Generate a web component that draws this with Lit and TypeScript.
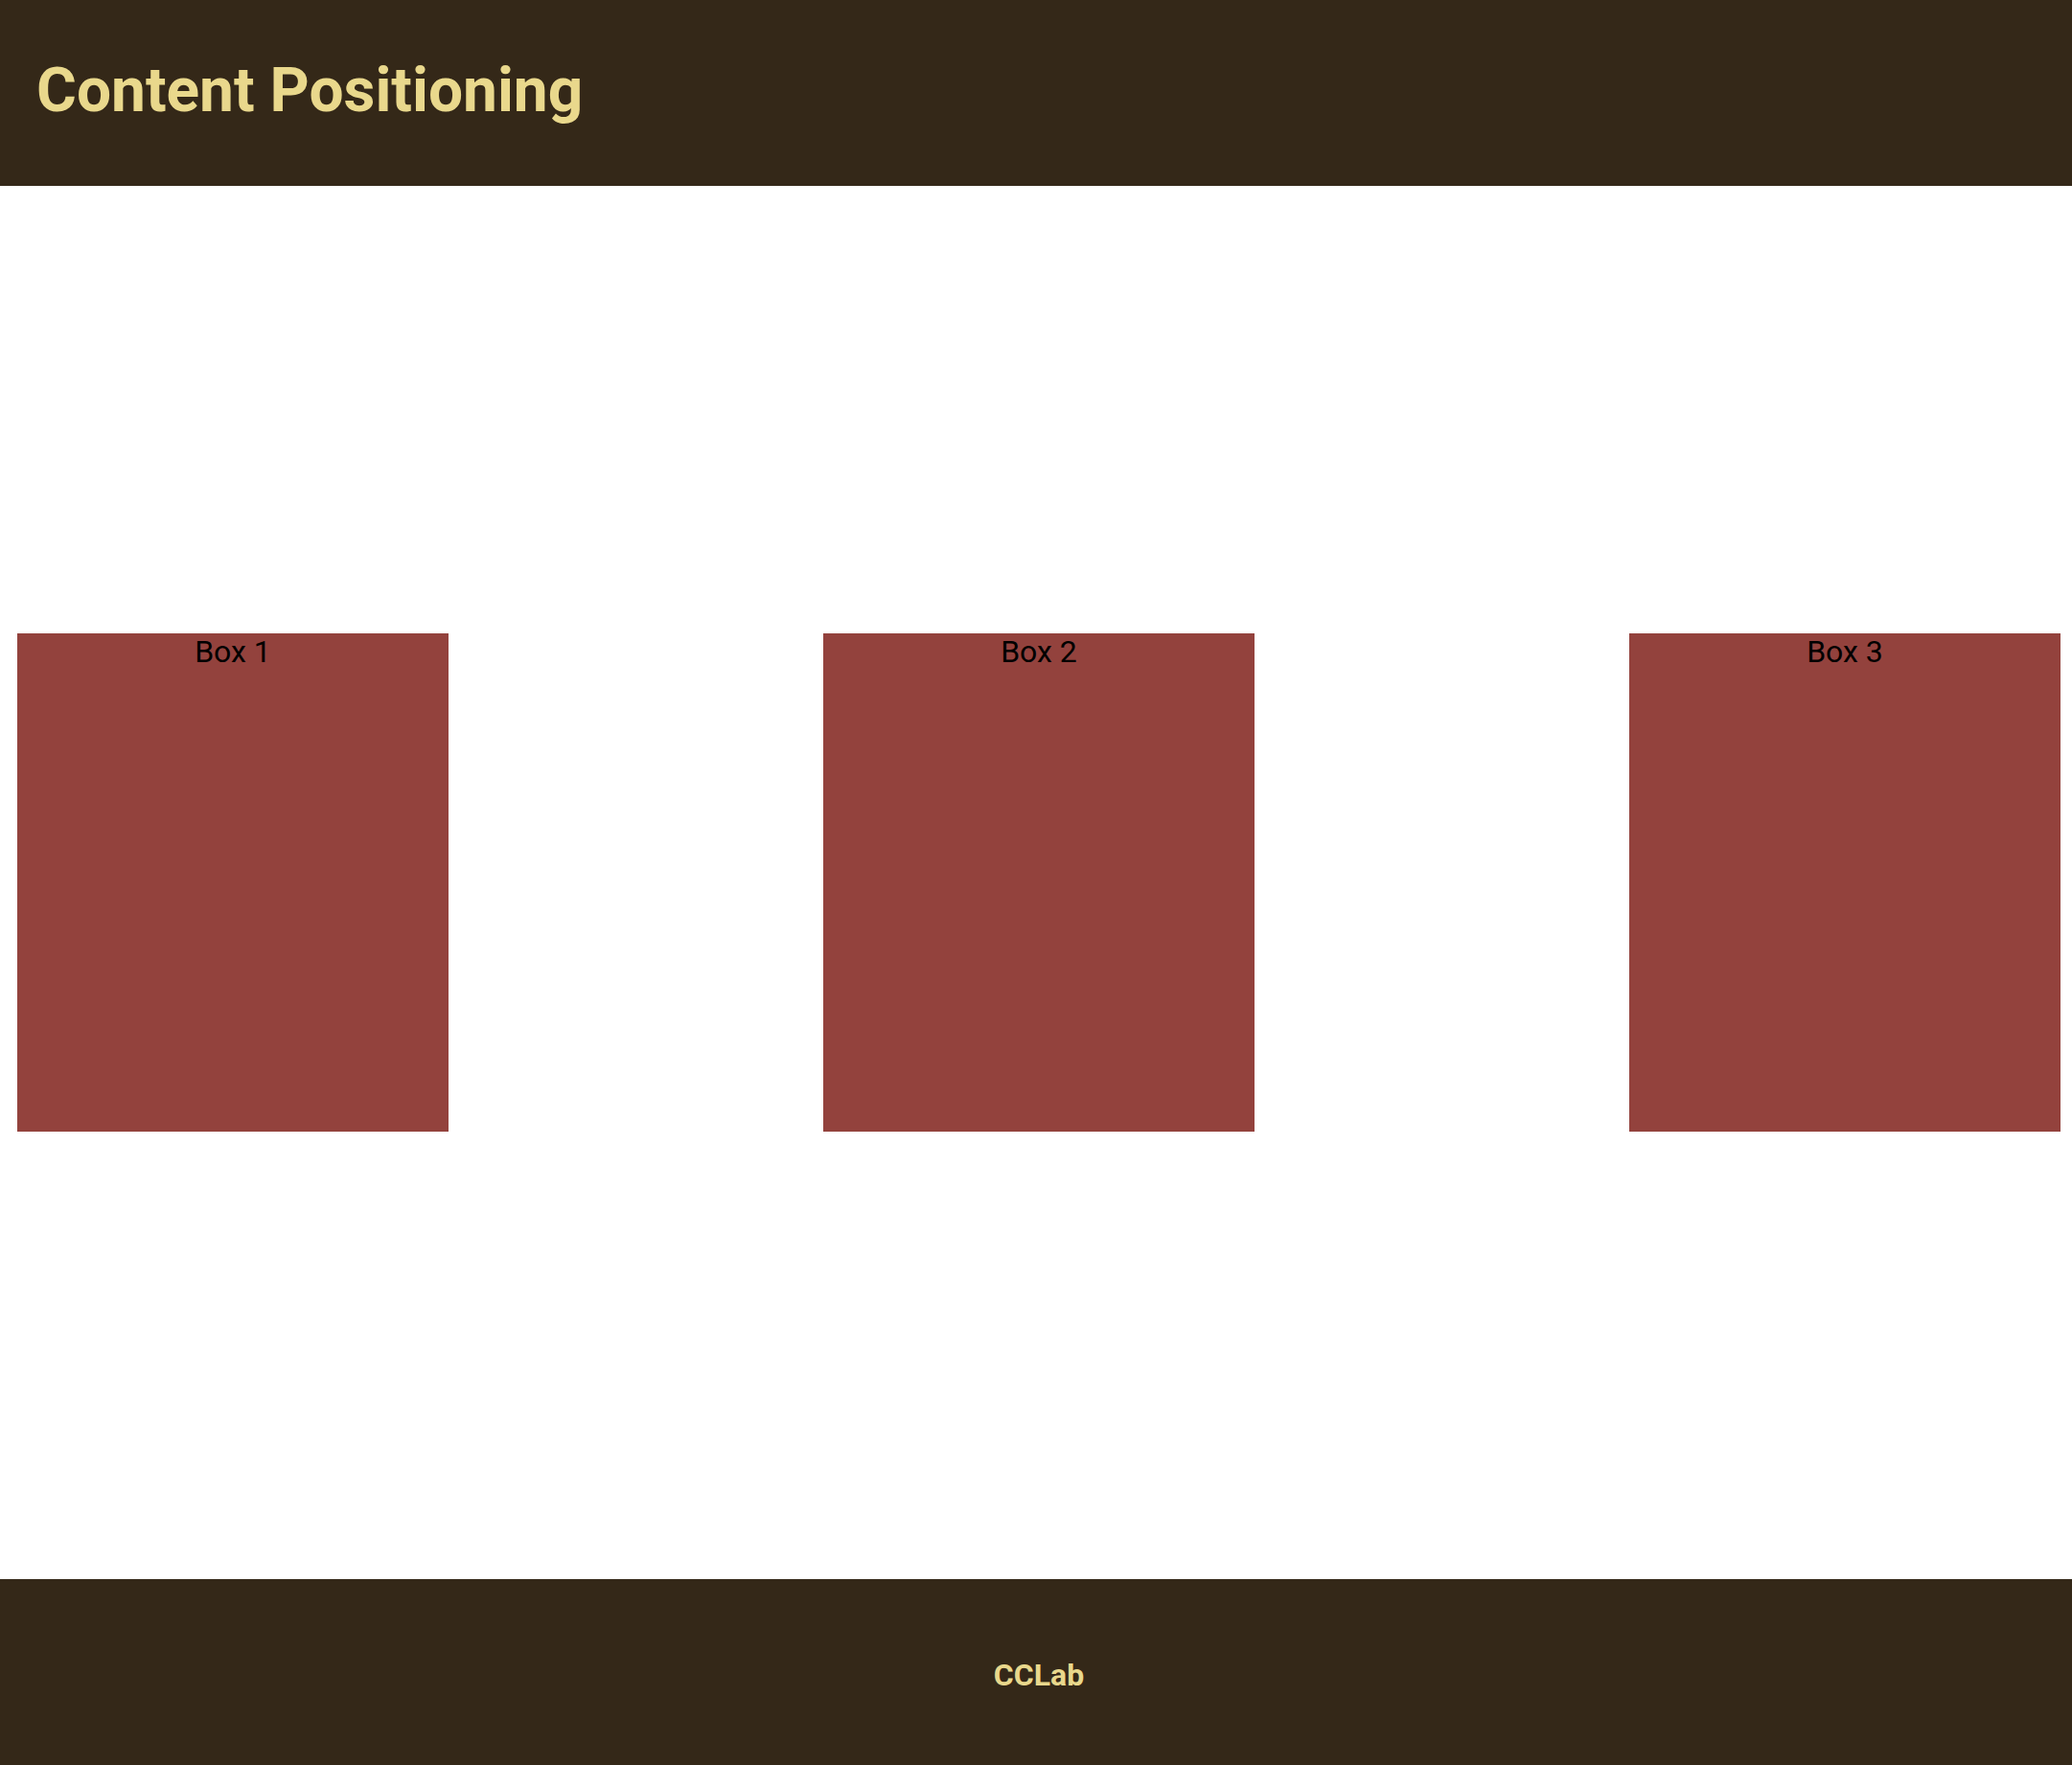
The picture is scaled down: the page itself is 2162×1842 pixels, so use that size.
import { LitElement, html, css } from "lit";
import { customElement } from "lit/decorators.js";

@customElement("app-root")
export class AppRoot extends LitElement {
  static styles = css`
    :host {
      display: flex;
      flex-direction: column;
      min-height: 100vh;
      font-family: Roboto, sans-serif;
      font-size: 32px;
      line-height: 38px;
      color: #000;
      background: #fff;
    }
    .bar {
      display: flex;
      align-items: center;
      box-sizing: border-box;
      min-height: 194px;
      background: #342818;
      color: #e9d88c;
    }
    .top {
      padding: 0 38px 4px;
    }
    .bottom {
      justify-content: center;
      padding: 6px 0 0 6px;
      font-weight: 700;
    }
    .title {
      margin: 0;
      font-size: 64px;
      line-height: 76px;
      font-weight: 700;
    }
    .boxes {
      flex: 1;
      display: flex;
      align-items: center;
      justify-content: space-between;
      padding: 0 12px 0 18px;
    }
    .box {
      width: 450px;
      height: 520px;
      background: #93423d;
      text-align: center;
    }
  `;

  render() {
    return html`
      <header class="bar top"><h1 class="title">Content Positioning</h1></header>
      <main class="boxes">
        ${[1, 2, 3].map((n) => html`<section class="box">Box ${n}</section>`)}
      </main>
      <footer class="bar bottom">CCLab</footer>
    `;
  }
}
